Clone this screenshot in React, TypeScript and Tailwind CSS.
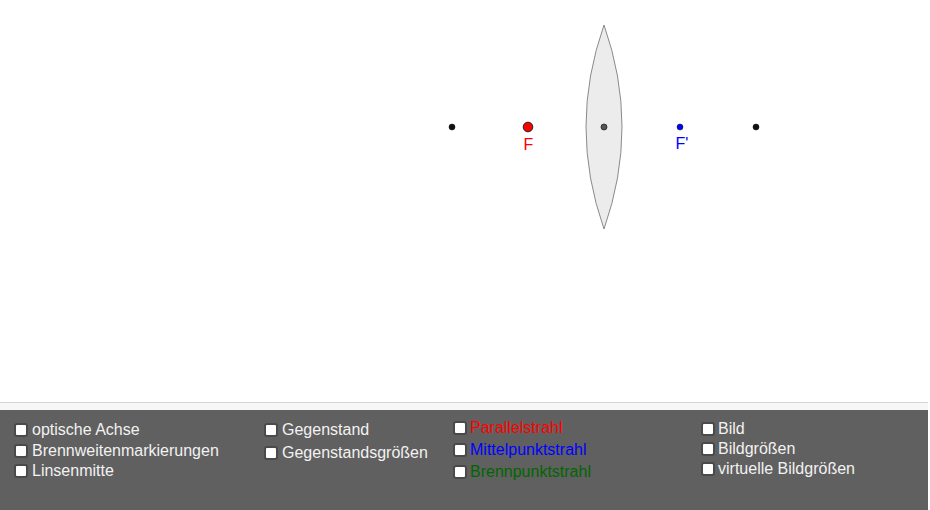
import React from "react";

const Box = () => (
  <span className="inline-block w-[14px] h-[14px] shrink-0 rounded-[3px] bg-white border-2 border-[#4a4a4a] box-border" />
);

const Row = ({ label, color, h, gap = 4 }: { label: string; color?: string; h: string; gap?: number }) => (
  <div className={`flex items-center ${h}`}>
    <Box />
    <span className={gap === 3 ? "ml-[3px]" : "ml-[4px]"} style={{ color: color ?? "#f2f2f2" }}>
      {label}
    </span>
  </div>
);

export default function App() {
  return (
    <div className="w-[930px] h-[510px] overflow-hidden bg-white" style={{ fontFamily: '"Liberation Sans", Arial, sans-serif' }}>
      <div className="h-[402px] w-full bg-white">
        <svg width="930" height="402" viewBox="0 0 930 402">
          <path d="M604 25 Q568 127 604 229 Q640 127 604 25 Z" fill="#ececec" stroke="#8a8a8a" strokeWidth="1" />
          <circle cx="452" cy="127" r="3" fill="#111" stroke="#000" strokeWidth="0.5" />
          <circle cx="528" cy="127" r="4.8" fill="#ff0000" stroke="#222" strokeWidth="1" />
          <circle cx="604" cy="127" r="3" fill="#555" stroke="#222" strokeWidth="0.8" />
          <circle cx="680" cy="127" r="3" fill="#0000ff" stroke="#222" strokeWidth="0.6" />
          <circle cx="756" cy="127" r="3" fill="#111" stroke="#000" strokeWidth="0.5" />
          <text x="523.5" y="150" fontSize="16" fill="#ff0000" fontFamily="Liberation Sans, Arial, sans-serif">F</text>
          <text x="675.5" y="149" fontSize="16" fill="#0000ff" fontFamily="Liberation Sans, Arial, sans-serif">F'</text>
        </svg>
      </div>
      <div className="w-[928px] h-[1px] bg-[#d6d6d6]" />
      <div className="w-[928px] h-[7px] bg-[#f7f7f7]" />
      <div className="w-[928px] h-[100px] bg-[#606060] flex text-[16px] leading-[18px]">
        <div className="w-[264px] pl-[14px] pt-[10px] flex flex-col">
          <Row label="optische Achse" h="h-[20.5px]" />
          <Row label="Brennweitenmarkierungen" h="h-[20.5px]" />
          <Row label="Linsenmitte" h="h-[20.5px]" />
        </div>
        <div className="w-[189px] pt-[8px] flex flex-col">
          <Row label="Gegenstand" h="h-[23px]" />
          <Row label="Gegenstandsgrößen" h="h-[23px]" />
        </div>
        <div className="w-[248px] pt-[7px] flex flex-col">
          <Row label="Parallelstrahl" color="#ff0000" h="h-[22px]" gap={3} />
          <Row label="Mittelpunktstrahl" color="#0000ff" h="h-[22px]" gap={3} />
          <Row label="Brennpunktstrahl" color="#006600" h="h-[21px]" gap={3} />
        </div>
        <div className="pt-[9px] flex flex-col">
          <Row label="Bild" h="h-[20px]" gap={3} />
          <Row label="Bildgrößen" h="h-[20px]" gap={3} />
          <Row label="virtuelle Bildgrößen" h="h-[20px]" gap={3} />
        </div>
      </div>
    </div>
  );
}
